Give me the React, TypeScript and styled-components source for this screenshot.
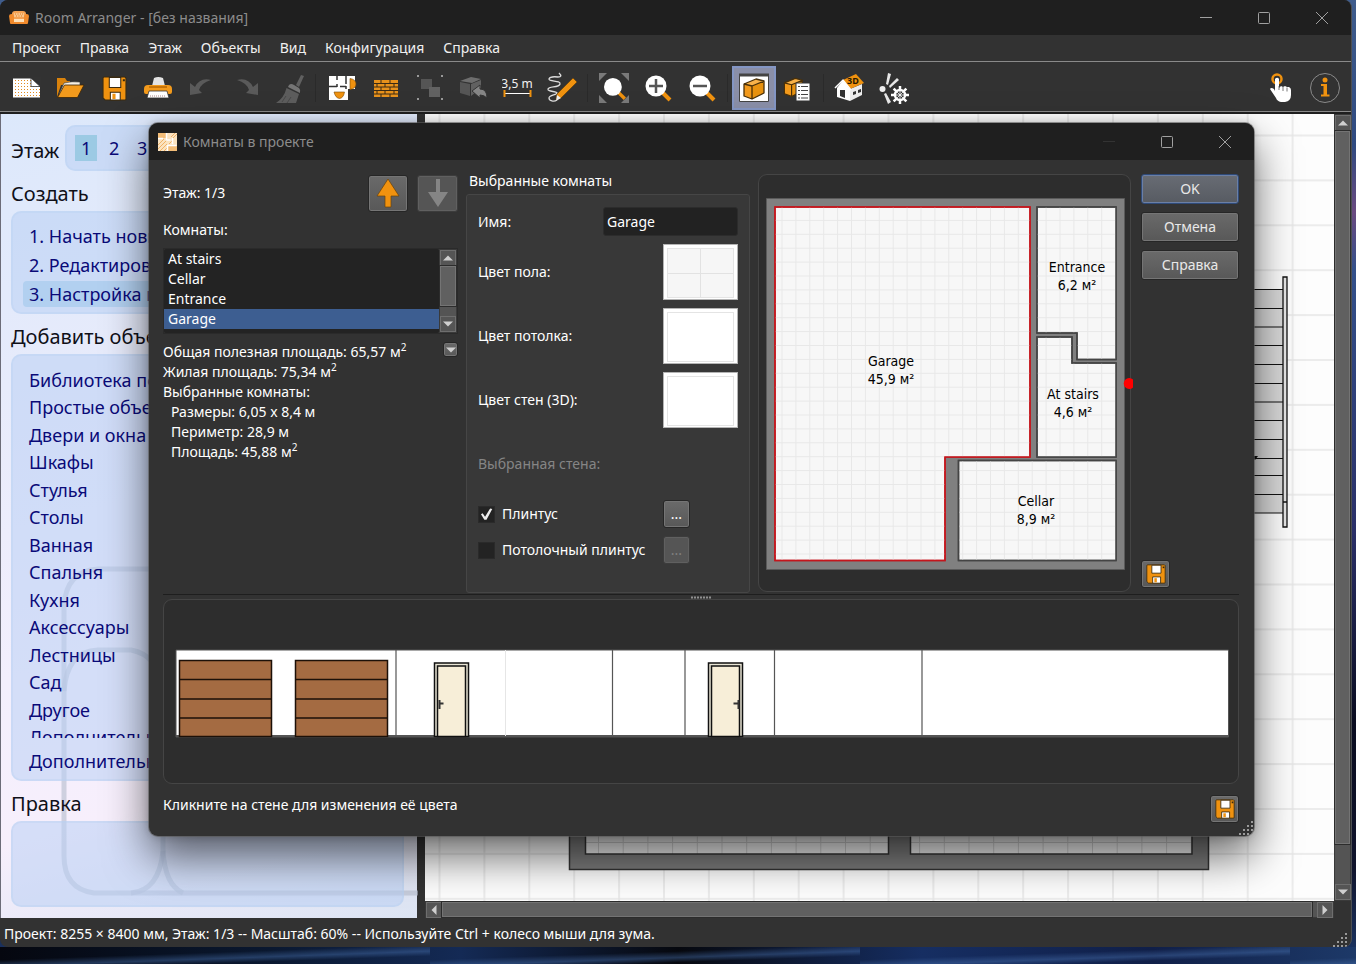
import React from "react";
import styled, { createGlobalStyle, css } from "styled-components";

const UI = `"Noto Sans", "Open Sans", sans-serif`;
const ORANGE = "#f0920f";

const Global = createGlobalStyle`
  * { box-sizing: border-box; }
  body {
    margin: 0;
    font-family: ${UI};
    font-size: 14px;
    line-height: 20px;
    color: #fff;
    background: #0d1a38;
  }
  button, input, select { font: inherit; color: inherit; margin: 0; }
  ul { list-style: none; margin: 0; padding: 0; }
  svg { display: block; flex: none; }
`;

const Desktop = styled.div`
  min-height: 100vh;
  padding: 0 4px 17px 0;
  background:
    linear-gradient(178deg, transparent 0 40%, rgba(70, 110, 170, 0.45) 60%, transparent 75%) 0 100% / 430px 17px repeat-x,
    linear-gradient(90deg, #05070f 0%, #0a1830 20%, #142a55 34%, #06080e 50%, #162e62 68%, #101f48 85%, #1d3968 100%) 0 100% / 100% 17px no-repeat,
    linear-gradient(180deg, #3f5c8c 0%, #2f4a80 15%, #6a4a80 22%, #33508a 28%, #2a2f68 55%, #0a0c20 75%, #10142c 90%, #1c3768 100%);
`;

const Window = styled.div`
  position: relative;
  display: flex;
  flex-direction: column;
  min-height: calc(100vh - 17px);
  background: #323232;
  border-right: 1px solid #4c4f52;
  border-radius: 8px;
  overflow: hidden;
`;

const TitleBar = styled.header<{ $tall?: boolean }>`
  display: flex;
  align-items: center;
  height: ${(p) => (p.$tall ? 37 : 35)}px;
  padding-left: 9px;
  background: #1f1f1f;
  color: #8c8c8c;
`;

const TitleText = styled.h1`
  margin: 0 0 0 6px;
  flex: 1;
  font-size: 14px;
  font-weight: 400;
`;

const CaptionButton = styled.button<{ $dim?: boolean }>`
  display: grid;
  place-items: center;
  width: 58px;
  height: 32px;
  padding: 0;
  border: 0;
  background: none;
  color: ${(p) => (p.$dim ? "#333" : "#a0a0a0")};
`;

const MenuBar = styled.nav`
  display: flex;
  align-items: center;
  gap: 1px;
  height: 27px;
  padding-left: 3px;
  border-bottom: 1px solid #8a8a8a;
`;

const MenuItem = styled.button`
  padding: 0 9px;
  border: 0;
  background: none;
  color: #f0f0f0;
`;

const ToolBar = styled.div`
  display: flex;
  align-items: center;
  height: 52px;
  padding: 2px 4px 0;
  border-bottom: 2px solid #1f1f1f;
  box-shadow: inset 0 -1px #8a8a8a;
`;

const ToolButton = styled.button<{ $on?: boolean }>`
  display: grid;
  place-items: center;
  width: 44px;
  height: 44px;
  padding: 0;
  border: ${(p) => (p.$on ? "2px solid #8496c4" : "0")};
  background: ${(p) => (p.$on ? "#8a8fa8" : "none")};
`;

const ToolGap = styled.span`
  width: 8px;
  height: 28px;
  background: linear-gradient(90deg, transparent 3px, #2a2a2a 3px 4px, transparent 4px);
`;

const Spring = styled.span`
  flex: 1;
`;

const Work = styled.main`
  flex: 1;
  display: flex;
`;

const Sidebar = styled.aside`
  position: relative;
  display: flex;
  flex-direction: column;
  width: 417px;
  padding: 11px 13px 11px 10px;
  border-left: 1px solid #6c6c78;
  color: #101018;
  font-size: 18px;
  line-height: 26px;
  background: linear-gradient(165deg, #dce8fb 0%, #e7ebfb 30%, #f3effd 62%, #f7effc 80%, #dce4f3 100%);
`;

const SideArt = styled.svg`
  position: absolute;
  left: 0;
  bottom: 0;
`;

const SideHeading = styled.h2`
  position: relative;
  margin: 0;
  padding: 10px 0 4px;
  font-size: 20px;
  font-weight: 400;
  line-height: 26px;
`;

const FloorRow = styled.div`
  position: relative;
  display: flex;
  align-items: center;
  gap: 6px;
  font-size: 20px;
`;

const sideBox = css`
  border: 2px solid rgba(184, 208, 240, 0.35);
  border-radius: 10px;
  background: rgba(186, 208, 244, 0.55);
`;

const FloorBox = styled.div`
  ${sideBox}
  display: flex;
  flex: 1;
  gap: 6px;
  padding: 8px;
  font-size: 18px;
`;

const FloorButton = styled.button<{ $on?: boolean }>`
  width: 22px;
  height: 26px;
  padding: 0;
  border: 0;
  background: ${(p) => (p.$on ? "#9ccae4" : "none")};
  color: #0a0a78;
`;

const SideBox = styled.div<{ $grow?: boolean }>`
  ${sideBox}
  position: relative;
  padding: 10px 10px 5px;
  flex: ${(p) => (p.$grow ? "1" : "none")};
`;

const SideScroll = styled.div`
  height: 372px;
  margin-bottom: 10px;
  overflow: hidden;
`;

const CategoryList = styled.ul`
  display: grid;
  grid-auto-rows: 1fr;
  align-items: center;
  height: 385px;
`;

const StepList = styled.ul`
  display: grid;
  gap: 3px;
`;

const SideLink = styled.a<{ $on?: boolean }>`
  display: block;
  padding: 0 6px;
  border-radius: 4px;
  white-space: nowrap;
  text-decoration: none;
  color: #0a0a78;
  background: ${(p) => (p.$on ? "#b2d0f0" : "none")};
`;

const ViewGrid = styled.section`
  flex: 1;
  display: grid;
  grid-template: 1fr 17px / 1fr 17px;
  margin-left: 8px;
`;

const Canvas = styled.div`
  position: relative;
  overflow: hidden;
  background: #fdfdfd;
`;

const CanvasDrawing = styled.svg`
  position: absolute;
  width: 100%;
  height: 100%;
`;

const ScrollBar = styled.div<{ $across?: boolean }>`
  display: flex;
  flex-direction: ${(p) => (p.$across ? "row" : "column")};
  background: #545454;
  border: 1px solid #3a3a3a;
`;

const ScrollArrow = styled.button`
  display: grid;
  place-items: center;
  flex: none;
  width: 16px;
  height: 16px;
  padding: 0;
  border: 1px solid #6e6e6e;
  background: #555;
`;

const ScrollThumb = styled.div<{ $part: number }>`
  flex: ${(p) => p.$part};
  border: 1px solid #747474;
  outline: 1px solid #2c2c2c;
  background: #606060;
`;

const ScrollRest = styled.div<{ $part: number }>`
  flex: ${(p) => p.$part};
`;

const StatusBar = styled.footer`
  display: flex;
  align-items: center;
  height: 29px;
  padding: 2px 4px 0;
`;

const SizeGrip = styled.svg`
  align-self: flex-end;
  margin-left: auto;
`;

const Dialog = styled.section`
  position: absolute;
  top: 123px;
  left: 149px;
  right: 97px;
  border-radius: 9px;
  background: #323232;
  box-shadow: 0 0 0 1px rgba(90, 90, 90, 0.6), 0 20px 44px rgba(0, 0, 0, 0.6), 0 0 8px rgba(0, 0, 0, 0.2);
  overflow: hidden;
`;

const DialogBody = styled.div`
  padding: 14px 15px 0 14px;
`;

const Columns = styled.div`
  display: flex;
  height: 421px;
  border-bottom: 1px solid #1e1e1e;
`;

const RoomColumn = styled.div`
  width: 295px;
  margin-right: 8px;
`;

const FloorSwitch = styled.div`
  display: flex;
  align-items: center;
  gap: 9px;
  height: 38px;
`;

const raised = css`
  border: 1px solid #262626;
  border-radius: 3px;
  background: linear-gradient(#6a6a6a, #585858);
  box-shadow: inset 0 0 0 1px #757575;
`;

const IconButton = styled.button<{ $w: number; $h: number; $off?: boolean }>`
  ${raised}
  display: grid;
  place-items: center;
  flex: none;
  width: ${(p) => p.$w}px;
  height: ${(p) => p.$h}px;
  padding: 0;
  ${(p) =>
    p.$off &&
    css`
      border-color: #3c3c3c;
      color: #808080;
      background: #555;
      box-shadow: inset 0 0 0 1px #606060;
    `}
`;

const RoomsLabel = styled.label`
  display: block;
  padding: 8px 0;
`;

const ListFrame = styled.div`
  display: flex;
  height: 86px;
  border: 1px solid #2a2a2a;
`;

const RoomSelect = styled.select`
  flex: 1;
  padding: 0;
  border: 0;
  outline: 0;
  overflow: hidden;
  appearance: none;
  background: #232323;
  color: #fff;
  option {
    min-height: 20px;
    padding: 0 4px;
    line-height: 20px;
  }
  option:checked {
    color: #fff;
    background: #3d5e91 linear-gradient(#3d5e91, #3d5e91);
  }
`;

const Stats = styled.div`
  display: flex;
  justify-content: space-between;
  padding: 8px 0;
`;

const StatLine = styled.p<{ $in?: boolean }>`
  margin: 0;
  padding-left: ${(p) => (p.$in ? 8 : 0)}px;
  sup {
    font-size: 10px;
    line-height: 0;
  }
`;

const PropColumn = styled.fieldset`
  display: flex;
  flex-direction: column;
  width: 284px;
  margin: -3px 8px 0 0;
  padding: 0;
  border: 0;
`;

const PropTitle = styled.legend`
  height: 20px;
  padding: 0 3px;
`;

const PropBox = styled.div`
  display: flex;
  flex-direction: column;
  gap: 8px;
  height: 399px;
  margin-top: 3px;
  padding: 12px 11px;
  border: 1px solid #464646;
  border-radius: 3px;
  background: #383838;
`;

const PropRow = styled.div<{ $h: number; $off?: boolean }>`
  display: flex;
  align-items: center;
  justify-content: space-between;
  height: ${(p) => p.$h}px;
  color: ${(p) => (p.$off ? "#858585" : "#fff")};
`;

const NameInput = styled.input`
  width: 135px;
  height: 29px;
  padding: 0 3px;
  border: 1px solid #2c2c2c;
  border-radius: 3px;
  background: #222;
`;

const Swatch = styled.button<{ $tiled?: boolean }>`
  width: 75px;
  height: 56px;
  padding: 3px;
  border: 1px solid #b4b4b4;
  background: #fff;
  &::before {
    content: "";
    display: block;
    height: 100%;
    border: 1px solid #e4e4e4;
    background: ${(p) =>
      p.$tiled
        ? "linear-gradient(#e2e2e2, #e2e2e2) 50% 0 / 1px 100% no-repeat, linear-gradient(#e2e2e2, #e2e2e2) 0 50% / 100% 1px no-repeat, #f6f6f6"
        : "#fff"};
  }
`;

const CheckRow = styled.div`
  display: flex;
  align-items: center;
  height: 28px;
`;

const CheckLabel = styled.label`
  display: flex;
  align-items: center;
  gap: 7px;
  width: 185px;
  white-space: nowrap;
`;

const CheckBox = styled.input`
  appearance: none;
  width: 17px;
  height: 17px;
  border: 1px solid #2a2a2a;
  background: #232323;
  display: grid;
  place-items: center;
  &:checked::before {
    content: "";
    width: 12px;
    height: 12px;
    background: #eee;
    clip-path: polygon(4% 52%, 18% 44%, 38% 72%, 80% 4%, 98% 8%, 50% 98%, 32% 98%);
  }
`;

const frame = css`
  border: 1px solid #454545;
  border-radius: 9px;
  background: #2d2d2d;
`;

const PlanPanel = styled.div`
  ${frame}
  flex: 1;
  height: 418px;
  svg { width: 100%; height: 100%; overflow: visible; }
`;

const Actions = styled.div`
  display: flex;
  flex-direction: column;
  gap: 8px;
  width: 98px;
  margin-left: 10px;
  padding-bottom: 6px;
`;

const ActionButton = styled.button<{ $main?: boolean }>`
  ${raised}
  height: 30px;
  padding: 0;
  color: #e8e8e8;
  ${(p) =>
    p.$main &&
    css`
      border-color: #2f4a78;
      background: linear-gradient(#686c74, #575b62);
      box-shadow: inset 0 0 0 1px #6a7fa6;
    `}
`;

const Splitter = styled.div`
  display: grid;
  place-items: center;
  height: 4px;
`;

const ElevationPanel = styled.div`
  ${frame}
  height: 185px;
  svg { width: 100%; height: 100%; }
`;

const DialogFoot = styled.div`
  display: flex;
  justify-content: space-between;
  height: 52px;
  padding: 11px 15px 0 14px;
`;

const GripCorner = styled.svg`
  position: absolute;
  right: 1px;
  bottom: 1px;
`;

/* ---------- small drawings ---------- */

const Minimise = () => (
  <svg width="12" height="12" stroke="currentColor"><path d="M0 5.5h12" /></svg>
);
const Maximise = () => (
  <svg width="12" height="12" fill="none" stroke="currentColor"><rect x=".5" y=".5" width="11" height="11" rx="1" /></svg>
);
const CloseX = () => (
  <svg width="12" height="12" stroke="currentColor"><path d="M0 0L12 12M12 0L0 12" /></svg>
);

const Caption = ({ dim }: { dim?: boolean }) => (
  <>
    <CaptionButton aria-label="Свернуть" $dim={dim}><Minimise /></CaptionButton>
    <CaptionButton aria-label="Развернуть"><Maximise /></CaptionButton>
    <CaptionButton aria-label="Закрыть"><CloseX /></CaptionButton>
  </>
);

const Arrow = ({ turn }: { turn: number }) => (
  <svg width="10" height="10" viewBox="-5 -5 10 10"><path d="M-5 2.500L0-2.500L5 2.500z" fill="#cfcfcf" transform={`rotate(${turn})`} /></svg>
);

const gripDots = [[12, 0], [12, 4], [8, 4], [12, 8], [8, 8], [4, 8], [12, 12], [8, 12], [4, 12], [0, 12]];
const dots = gripDots.map(([x, y]) => <rect key={`${x}-${y}`} x={x} y={y} width="2" height="2" fill="#9a9a9a" />);

const Couch = () => (
  <svg width="20" height="14" viewBox="0 0 20 14">
    <path d="M3 3q0-3 3-3h8q3 0 3 3v7h-14z" fill="#f4a254" />
    <path d="M5 2h10v4h-10z" fill="#f9c48a" />
    <path d="M6 3h1M8.500 3h1M11 3h1M13 3h1M7 5h1M9.500 5h1M12 5h1" stroke="#e07a1c" />
    <path d="M5 8h10v3h-10z" fill="#fde0b8" />
    <path d="M0 5q0-2 2.500-2t2.500 3v5h10v-5q0-3 2.500-3t2.500 2l-1 7q0 1-1 1h-16q-1 0-1-1z" fill="#f08a2c" />
  </svg>
);

const RoomsIcon = () => (
  <svg width="19" height="18" viewBox="0 0 19 18">
    <rect width="19" height="18" fill="#fbe3c0" />
    <path d="M0 0h8v5h-8zM10 13h9v5h-9z" fill="#f3bd78" />
    <path d="M0 12l6-6M0 16l9-9M2 18l7-7M6 18l3-3M11 11l4-4M13 4l4-4M15 5l4-4" stroke="#f0b267" />
    <path d="M0 5.500h5M8.500 0v7h4M9.500 12v6M14.500 5v6M9.500 12.500h9" stroke="#fff" fill="none" strokeWidth="1.500" />
  </svg>
);

const Floppy = ({ size }: { size: number }) => (
  <svg width={size} height={size} viewBox="1 1 24 24">
    <path d="M2 3q0-1 1-1h20l1 1v20q0 1-1 1h-19l-2-2z" fill={ORANGE} stroke="#3a2a10" />
    <path d="M8 2.500h11v9.500h-11z" fill="#fff" stroke="#3a2a10" />
    <path d="M9 16.500h9.500v7.500h-9.500z" fill="#fff" stroke="#3a2a10" />
    <path d="M11 18h3v5h-3z" fill={ORANGE} />
    <path d="M21 4h2v2h-2z" fill="#3a2a10" />
  </svg>
);

const Svg = ({ children }: { children: React.ReactNode }) => (
  <svg width="32" height="32" viewBox="0 0 32 32" fill="none">{children}</svg>
);

const range = (n: number) => Array.from({ length: n }, (_, i) => i);

const NewIcon = () => (
  <Svg>
    <path d="M3 6.500h18l9 8v11h-27z" fill="#fff" />
    {range(9).map((i) => range(6).map((j) => (
      <rect key={`${i}${j}`} x={5 + i * 3} y={8 + j * 3} width="1" height="1" fill="#e08a20" />
    )))}
    <path d="M21 6v8.500h9z" fill="#fff" stroke="#333" strokeWidth=".8" />
    <path d="M22 5h9v9z" fill="#333" />
  </Svg>
);
const OpenIcon = () => (
  <Svg>
    <path d="M3 25V6h8l2 3h3v4h-9z" fill="#d9820c" />
    <path d="M5 22l5-11q8-2 16-1v3" fill="#f7f0e4" stroke="#333" strokeWidth=".6" />
    <path d="M3.500 25.500l7-12.500h19.500l-6.500 12.500z" fill="#f39a1c" stroke="#3b2505" strokeWidth=".8" />
  </Svg>
);
const PrintIcon = () => (
  <Svg>
    <path d="M10 14l2-8q4-2 9 0l2 8z" fill="#e4e4e4" />
    <path d="M2 17q0-4 4-4h20q4 0 4 4v3q0 2-2 2h-24q-2 0-2-2z" fill="#f39a1c" />
    <path d="M7 14h18v2h-18z" fill="#c87408" />
    <path d="M7 19h18l2 7h-22z" fill="#fff" stroke="#333" strokeWidth=".8" />
    <path d="M8 24h16" stroke="#a88" strokeDasharray="1 1" />
  </Svg>
);
const UndoIcon = () => <Svg><path d="M4 11v12l12-2-3-3q2-7 12-10-11-3-16 7z" fill="#5a5a5a" /></Svg>;
const RedoIcon = () => <Svg><path d="M28 11v12l-12-2 3-3q-2-7-12-10 11-3 16 7z" fill="#5a5a5a" /></Svg>;
const BrushIcon = () => (
  <Svg>
    <path d="M27 3l3 1-5 11-3-2z" fill="#606060" />
    <path d="M15 13q2-2 5 0l5 3q2 2 1 5l-12-6z" fill="#757575" />
    <path d="M12.500 16l12.500 6-3 9h-20q8-5 10.500-15z" fill="#5d5d5d" />
    <path d="M8 30l4-6M13 31l4-6" stroke="#484848" />
  </Svg>
);
const LayoutIcon = () => (
  <Svg>
    <path d="M3 4h26v13h-7v11h-19z" fill="#fff" />
    <path d="M3 14.500h8M14 14.500h6M11 4v4M20 4v8M11 12v3M20 14v3" stroke="#333" strokeWidth="1.500" />
    <path d="M24 6.500q6 1 6 5.500t-6 5.500z" fill={ORANGE} stroke="#7a4a08" strokeWidth=".6" />
    <path d="M8 20h10.500q-1 6-5 6.500-4-.5-5.500-6.500z" fill={ORANGE} stroke="#7a4a08" strokeWidth=".6" />
  </Svg>
);
const BrickIcon = () => (
  <Svg>
    <path d="M4 8h24v17h-24z" fill="#e8921c" />
    <path d="M4 11.500h24M4 15h24M4 18.500h24M4 22h24M11 8v3M20 8v3M7 12v3M15 12v3M24 12v3M11 15v3M20 15v3M7 19v3M15 19v3M24 19v3M11 22v3M20 22v3" stroke="#3a2a14" />
  </Svg>
);
const GroupIcon = () => (
  <Svg>
    <path d="M7 7h11v10h-11z" fill="#555" />
    <path d="M15 15h11v10h-11z" fill="#626262" />
    <path d="M3 3h2v2h-2zM27 3h2v2h-2zM3 26h2v2h-2zM27 26h2v2h-2z" fill="#999" />
  </Svg>
);
const InsertIcon = () => (
  <Svg>
    <path d="M2 9l11-4 10 2-9 4z" fill="#6e6e6e" />
    <path d="M2 10l10 2v12l-10-3z" fill="#565656" />
    <path d="M13 12l10-4v8l-10 8z" fill="#616161" />
    <path d="M14 19l8-6v4q7 0 7 9-3-3-7-3v3z" fill="#868686" stroke="#333" />
  </Svg>
);
const MeasureText = styled.text`
  font: 12px ${UI};
  fill: #f2f2f2;
  text-anchor: middle;
`;
const MeasureIcon = () => (
  <Svg>
    <MeasureText x="15" y="16">3,5 m</MeasureText>
    <path d="M3 21.500h25" stroke="#fff" />
    <path d="M2.500 18v7M28.500 18v7" stroke={ORANGE} strokeWidth="2" />
  </Svg>
);
const PencilIcon = () => (
  <Svg>
    <path d="M13 1q4 4-1 4-8-1-9 2c0 3 12 1 11 5s-11 2-12 5 9 2 9 4-8 2-8 5 5 4 8 2" stroke="#ddd" strokeWidth="1.300" />
    <path d="M27 6l4 4-16 16-5 2 1-6z" fill={ORANGE} stroke="#5a3a08" strokeWidth=".6" />
    <path d="M11 23l4 3-5 3z" fill="#eee" />
  </Svg>
);
const Lens = ({ sign }: { sign?: string }) => (
  <>
    <path d="M21 21l7 7" stroke={ORANGE} strokeWidth="4" />
    <circle cx="14" cy="14" r="10.500" fill="#fff" />
    {sign && <path d={sign} stroke="#555" strokeWidth="2.500" />}
  </>
);
const FitIcon = () => (
  <Svg>
    <path d="M1 9v-8h8zM23 1h8v8zM1 23v8h8zM31 23v8h-8z" fill="#7a7a7a" />
    <g transform="translate(3 3) scale(.85)"><Lens /></g>
  </Svg>
);
const ZoomInIcon = () => <Svg><Lens sign="M14 7v14M7 14h14" /></Svg>;
const ZoomOutIcon = () => <Svg><Lens sign="M7 14h14" /></Svg>;
const Box3d = () => (
  <>
    <path d="M6 11l12-5 8 2-12 5z" fill="#f8b24a" />
    <path d="M6 11l8 2v13l-8-3z" fill="#f39a1c" />
    <path d="M14 13l12-5v12l-12 6z" fill="#e8920f" />
    <path d="M6 11l12-5 8 2v12l-12 6-8-3zM6 11l8 2v13M14 13l12-5" stroke="#4a3008" strokeWidth="1.300" strokeLinejoin="round" />
  </>
);
const ViewBoxIcon = () => (
  <Svg>
    <path d="M1.500 2.500h29v27h-29z" fill="#fff" stroke="#444" />
    <path d="M1 3h30" stroke="#444" strokeWidth="3" />
    <g transform="translate(0 1)"><Box3d /></g>
  </Svg>
);
const ListIcon = () => (
  <Svg>
    <g transform="translate(-3 1) scale(.9)"><Box3d /></g>
    <path d="M14 11h14v18h-14z" fill="#fff" stroke="#333" />
    <path d="M16 14.500h2M16 18.500h2M16 22.500h2M19 14.500h7M19 18.500h7M19 22.500h7M16 26h2M19 26h7" stroke="#444" />
  </Svg>
);
const House3dText = styled.text`
  font: 700 9px ${UI};
  fill: #2a1a00;
`;
const HouseIcon = () => (
  <Svg>
    <path d="M3 16l6-8 7 9v12l-13-4z" fill="#fff" />
    <path d="M16 17l12-5v11l-12 6z" fill="#ececec" />
    <path d="M9 8l13-6 8 9-14 6z" fill={ORANGE} />
    <path d="M1 16l8-8 8 10" stroke="#fff" strokeWidth="1.500" />
    <path d="M6 18h5v8l-5-2z" fill="#333" />
    <path d="M19 20l3-1v3l-3 1zM24 18l3-1v3l-3 1z" fill="#333" />
    <House3dText x="13" y="12">3D</House3dText>
  </Svg>
);
const RenderIcon = () => (
  <Svg>
    <circle cx="4.500" cy="17" r="3" fill="#eee" />
    <path d="M8 12l2-11 3 1-3 11zM11 14l8-8 2 2-9 8zM8 21l5 9-3 2-4-10z" fill="#e8e8e8" />
    <g transform="translate(22 23)">
      <circle r="5" stroke="#fff" strokeWidth="2.500" />
      {range(8).map((i) => <path key={i} d="M0-5V-9" stroke="#fff" strokeWidth="2.500" transform={`rotate(${i * 45})`} />)}
      <path d="M0-5V5M-5 0H5M-3.500-3.500L3.500 3.500M3.500-3.500L-3.500 3.500" stroke="#fff" strokeWidth=".8" />
    </g>
  </Svg>
);
const TouchIcon = () => (
  <Svg>
    <circle cx="12" cy="7" r="4.500" stroke={ORANGE} strokeWidth="2.500" />
    <path d="M11 6q2-1 3 1v9l2-2 2 1 2-1 2 1 2 0q2 1 2 3v5q0 6-6 7h-4q-4-1-5-4l-6-9q1-2 4 0l1 2V7z" fill="#fff" />
    <path d="M14 14v4M18 15v4M22 15.500v4" stroke="#555" strokeWidth=".8" />
  </Svg>
);
const InfoIcon = () => (
  <Svg>
    <circle cx="16" cy="16" r="14.500" stroke="#8a8a8a" />
    <circle cx="16" cy="8" r="2.500" fill={ORANGE} />
    <path d="M12 12h6v10.500h2.500v2h-8.500v-2h2.500v-8.500h-2.500z" fill={ORANGE} />
  </Svg>
);

const tools: [string, React.FC, boolean?][][] = [
  [["Новый", NewIcon], ["Открыть", OpenIcon], ["Сохранить", () => <Floppy size={25} />], ["Печать", PrintIcon], ["Отменить", UndoIcon], ["Вернуть", RedoIcon], ["Кисть", BrushIcon]],
  [["Планировка", LayoutIcon], ["Стены", BrickIcon], ["Группировать", GroupIcon], ["Вставить", InsertIcon], ["Размер", MeasureIcon], ["Рисовать", PencilIcon]],
  [["Показать всё", FitIcon], ["Увеличить", ZoomInIcon], ["Уменьшить", ZoomOutIcon]],
  [["Объекты", ViewBoxIcon, true], ["Список объектов", ListIcon]],
  [["3D", HouseIcon], ["Рендеринг", RenderIcon]],
];

const menus = ["Проект", "Правка", "Этаж", "Объекты", "Вид", "Конфигурация", "Справка"];
const steps = ["1. Начать новый проект", "2. Редактировать", "3. Настройка комнат"];
const categories = [
  "Библиотека пользователя", "Простые объекты", "Двери и окна", "Шкафы", "Стулья", "Столы", "Ванная",
  "Спальня", "Кухня", "Аксессуары", "Лестницы", "Сад", "Другое", "Дополнительно",
];
const rooms = ["At stairs", "Cellar", "Entrance", "Garage"];

/* ---------- large drawings ---------- */

const HouseDrawing = () => (
  <CanvasDrawing>
    <defs>
      <pattern id="metre" width="44.900" height="44.900" patternUnits="userSpaceOnUse" x="13.500" y="20.500">
        <path d="M0 1h44.900M1 0v44.900" stroke="#e6e6e6" strokeWidth="1.500" />
      </pattern>
      <pattern id="tile" width="24.700" height="24.700" patternUnits="userSpaceOnUse" x="173" y="728">
        <path d="M0 .5h24.700M.5 0v24.700" stroke="#cfcfcf" />
      </pattern>
    </defs>
    <rect width="100%" height="100%" fill="url(#metre)" />
    <path d="M144.500 500h639v255.500h-639z" fill="#7c7c7c" stroke="#333" strokeWidth="1.500" />
    <path d="M160.500 500h303v240h-303zM485.500 500h281.500v240h-281.500z" fill="#f4f4f4" />
    <path d="M160.500 500h303v240h-303zM485.500 500h281.500v240h-281.500z" fill="url(#tile)" stroke="#333" strokeWidth="1.500" />
    <path d="M760 175.500h98v223.500h-98z" fill="#d9d9d9" />
    <path
      d="M760 175.500h98M760 194.500h98M760 213h98M760 231.500h98M760 250.500h98M760 269.500h98M760 288h98M760 306.500h98M760 325.500h98M760 344.500h98M760 361.500h98M760 380.500h98M760 399h98"
      stroke="#111" strokeWidth="1.200"
    />
    <path d="M858 163h4v250h-4zM858 388h4" fill="#e6e6e6" stroke="#111" strokeWidth="1.300" />
    <path d="M826 342h7l-3 4z" fill="#111" />
  </CanvasDrawing>
);

const PlanText = styled.text`
  font: 14px "DejaVu Sans Condensed", ${UI};
  fill: #000;
  text-anchor: middle;
`;

const planLabels: [number, number, string, string][] = [
  [891, 366, "Garage", "45,9 м²"],
  [1077, 272, "Entrance", "6,2 м²"],
  [1073, 399, "At stairs", "4,6 м²"],
  [1036, 506, "Cellar", "8,9 м²"],
];

const PlanDrawing = () => (
  <svg viewBox="759 175 371 416" role="img" aria-label="План этажа">
    <defs>
      <pattern id="planGrid" width="13.900" height="13.900" patternUnits="userSpaceOnUse" x="781.500" y="206">
        <path d="M0 .5h13.900M.5 0v13.900" stroke="#e8e8e8" />
      </pattern>
    </defs>
    <path d="M766.500 198.500h358v371h-358z" fill="#808080" stroke="#5a5a5a" />
    {["#f7f7f7", "url(#planGrid)"].map((fill) => (
      <g key={fill} fill={fill} strokeWidth="1.500">
        <path d="M1037 207H1116V359.500H1077V333H1037z" stroke="#444" />
        <path d="M1037 337H1072V363H1116V457H1037z" stroke="#444" />
        <path d="M958.500 460.500H1116V560.500H958.500z" stroke="#444" />
        <path d="M775 207H1030V457H945V560.500H775z" stroke="#c4161c" />
      </g>
    ))}
    <path d="M1133 379.500a5.500 5.500 0 1 0 0 8z" fill="#f00" />
    {planLabels.map(([x, y, name, area]) => (
      <React.Fragment key={name}>
        <PlanText x={x} y={y}>{name}</PlanText>
        <PlanText x={x} y={y + 18}>{area}</PlanText>
      </React.Fragment>
    ))}
  </svg>
);

const GarageDoor = ({ x }: { x: number }) => (
  <path d={`M${x} 660.500h92v76h-92zM${x} 679.500h92M${x} 699h92M${x} 718h92`} fill="#a46b42" stroke="#1c1008" strokeWidth="1.500" />
);
const RoomDoor = ({ x, flip }: { x: number; flip?: boolean }) => (
  <g>
    <path d={`M${x} 663h34v73.500h-34z`} fill="#e8e4d4" stroke="#111" strokeWidth="1.500" />
    <path d={`M${x + 3} 666h28v70.500h-28z`} fill="#f7eed8" stroke="#111" strokeWidth="1.500" />
    <path d={flip ? `M${x + 30} 700v9M${x + 25} 703.500h5` : `M${x + 5} 700v9M${x + 5} 703.500h4`} stroke="#333" strokeWidth="2" />
  </g>
);

const ElevationDrawing = () => (
  <svg viewBox="164 600 1074 183" role="img" aria-label="Развёртка стен">
    <path d="M176 650h1052.500v87h-1052.500z" fill="#fff" stroke="#555" />
    <path d="M176 736h1052.500" stroke="#555" strokeWidth="2" />
    <path d="M396 650v87M612.500 650v87M685 650v87M774.500 650v87M922 650v87" stroke="#555" strokeWidth="1.200" />
    <path d="M505.500 650v86" stroke="#e6e6e6" />
    <GarageDoor x={179.500} />
    <GarageDoor x={295.500} />
    <RoomDoor x={434.500} />
    <RoomDoor x={708.500} flip />
  </svg>
);

/* ---------- application ---------- */

const RoomsDialog = () => (
  <Dialog role="dialog" aria-label="Комнаты в проекте">
    <TitleBar $tall>
      <RoomsIcon />
      <TitleText as="h2">Комнаты в проекте</TitleText>
      <Caption dim />
    </TitleBar>
    <DialogBody>
      <Columns>
        <RoomColumn>
          <FloorSwitch>
            <Spring>Этаж: 1/3</Spring>
            <IconButton $w={40} $h={37} aria-label="Этаж выше">
              <svg width="26" height="30"><path d="M13 1l11 17h-8v11h-6v-11h-8z" fill={ORANGE} stroke="#6a4208" strokeWidth=".7" /></svg>
            </IconButton>
            <IconButton $w={41} $h={37} $off disabled aria-label="Этаж ниже">
              <svg width="26" height="30"><path d="M13 29l-10-15h8v-13h4v13h8z" fill="#858585" /></svg>
            </IconButton>
          </FloorSwitch>
          <RoomsLabel htmlFor="rooms">Комнаты:</RoomsLabel>
          <ListFrame>
            <RoomSelect id="rooms" size={4} defaultValue="Garage">
              {rooms.map((r) => <option key={r}>{r}</option>)}
            </RoomSelect>
            <ScrollBar>
              <ScrollArrow aria-label="Вверх"><Arrow turn={0} /></ScrollArrow>
              <ScrollThumb $part={40} />
              <ScrollRest $part={10} />
              <ScrollArrow aria-label="Вниз"><Arrow turn={180} /></ScrollArrow>
            </ScrollBar>
          </ListFrame>
          <Stats>
            <div>
              <StatLine>Общая полезная площадь: 65,57 м<sup>2</sup></StatLine>
              <StatLine>Жилая площадь: 75,34 м<sup>2</sup></StatLine>
              <StatLine>Выбранные комнаты:</StatLine>
              <StatLine $in>Размеры: 6,05 x 8,4 м</StatLine>
              <StatLine $in>Периметр: 28,9 м</StatLine>
              <StatLine $in>Площадь: 45,88 м<sup>2</sup></StatLine>
            </div>
            <IconButton $w={15} $h={15} aria-label="Подробнее"><Arrow turn={180} /></IconButton>
          </Stats>
        </RoomColumn>

        <PropColumn>
          <PropTitle>Выбранные комнаты</PropTitle>
          <PropBox>
            <PropRow $h={29}>
              <label htmlFor="room-name">Имя:</label>
              <NameInput id="room-name" defaultValue="Garage" />
            </PropRow>
            <PropRow $h={56}>
              <label htmlFor="floor-colour">Цвет пола:</label>
              <Swatch id="floor-colour" $tiled />
            </PropRow>
            <PropRow $h={56}>
              <label htmlFor="ceiling-colour">Цвет потолка:</label>
              <Swatch id="ceiling-colour" />
            </PropRow>
            <PropRow $h={56}>
              <label htmlFor="wall-colour">Цвет стен (3D):</label>
              <Swatch id="wall-colour" />
            </PropRow>
            <PropRow $h={56} $off>Выбранная стена:</PropRow>
            <CheckRow>
              <CheckLabel><CheckBox type="checkbox" defaultChecked />Плинтус</CheckLabel>
              <IconButton $w={27} $h={28} aria-label="Выбрать плинтус">...</IconButton>
            </CheckRow>
            <CheckRow>
              <CheckLabel><CheckBox type="checkbox" />Потолочный плинтус</CheckLabel>
              <IconButton $w={27} $h={28} $off disabled aria-label="Выбрать потолочный плинтус">...</IconButton>
            </CheckRow>
          </PropBox>
        </PropColumn>

        <PlanPanel><PlanDrawing /></PlanPanel>

        <Actions>
          <ActionButton $main>OK</ActionButton>
          <ActionButton>Отмена</ActionButton>
          <ActionButton>Справка</ActionButton>
          <Spring />
          <IconButton $w={29} $h={28} aria-label="Сохранить план"><Floppy size={20} /></IconButton>
        </Actions>
      </Columns>
      <Splitter>
        <svg width="22" height="3"><path d="M1 1.500h20" stroke="#909090" strokeWidth="2" strokeDasharray="2 1" /></svg>
      </Splitter>
      <ElevationPanel><ElevationDrawing /></ElevationPanel>
    </DialogBody>
    <DialogFoot>
      <span>Кликните на стене для изменения её цвета</span>
      <IconButton $w={29} $h={28} aria-label="Сохранить развёртку"><Floppy size={20} /></IconButton>
    </DialogFoot>
    <GripCorner width="14" height="14">{dots}</GripCorner>
  </Dialog>
);

export default function App() {
  return (
    <>
      <Global />
      <Desktop>
        <Window>
          <TitleBar>
            <Couch />
            <TitleText>Room Arranger - [без названия]</TitleText>
            <Caption />
          </TitleBar>
          <MenuBar>
            {menus.map((m) => <MenuItem key={m}>{m}</MenuItem>)}
          </MenuBar>
          <ToolBar>
            {tools.map((group, i) => (
              <React.Fragment key={i}>
                {i > 0 && <ToolGap />}
                {group.map(([name, Icon, on]) => (
                  <ToolButton key={name} aria-label={name} $on={on}><Icon /></ToolButton>
                ))}
              </React.Fragment>
            ))}
            <Spring />
            <ToolButton aria-label="Сенсорный режим"><TouchIcon /></ToolButton>
            <ToolButton aria-label="О программе"><InfoIcon /></ToolButton>
          </ToolBar>

          <Work>
            <Sidebar>
              <SideArt width="417" height="353" viewBox="0 564 417 353" fill="none" stroke="#b4bacb" strokeOpacity=".6" strokeWidth="5">
                <path d="M417 892H93Q63 888 63 855V605Q65 570 97 568H417" />
                <path d="M63 690Q66 650 97 649H130Q158 654 162 690V850Q158 890 130 892" />
                <path d="M162 850Q164 884 182 892" />
              </SideArt>
              <FloorRow>
                <SideHeading>Этаж</SideHeading>
                <FloorBox>
                  <FloorButton $on>1</FloorButton>
                  <FloorButton>2</FloorButton>
                  <FloorButton>3</FloorButton>
                </FloorBox>
              </FloorRow>
              <SideHeading>Создать</SideHeading>
              <SideBox>
                <StepList>
                  {steps.map((s, i) => <li key={s}><SideLink href="#" $on={i === 2}>{s}</SideLink></li>)}
                </StepList>
              </SideBox>
              <SideHeading>Добавить объекты</SideHeading>
              <SideBox>
                <SideScroll>
                  <CategoryList>
                    {categories.map((c) => <li key={c}><SideLink href="#">{c}</SideLink></li>)}
                  </CategoryList>
                </SideScroll>
                <SideLink href="#">Дополнительно</SideLink>
              </SideBox>
              <SideHeading>Правка</SideHeading>
              <SideBox $grow />
            </Sidebar>

            <ViewGrid>
              <Canvas><HouseDrawing /></Canvas>
              <ScrollBar>
                <ScrollArrow aria-label="Вверх"><Arrow turn={0} /></ScrollArrow>
                <ScrollThumb $part={712} />
                <ScrollRest $part={40} />
                <ScrollArrow aria-label="Вниз"><Arrow turn={180} /></ScrollArrow>
              </ScrollBar>
              <ScrollBar $across>
                <ScrollArrow aria-label="Влево"><Arrow turn={-90} /></ScrollArrow>
                <ScrollThumb $part={866} />
                <ScrollRest $part={5} />
                <ScrollArrow aria-label="Вправо"><Arrow turn={90} /></ScrollArrow>
              </ScrollBar>
            </ViewGrid>
          </Work>

          <StatusBar>
            Проект: 8255 × 8400 мм, Этаж: 1/3 -- Масштаб: 60% -- Используйте Ctrl + колесо мыши для зума.
            <SizeGrip width="14" height="14">{dots}</SizeGrip>
          </StatusBar>

          <RoomsDialog />
        </Window>
      </Desktop>
    </>
  );
}
